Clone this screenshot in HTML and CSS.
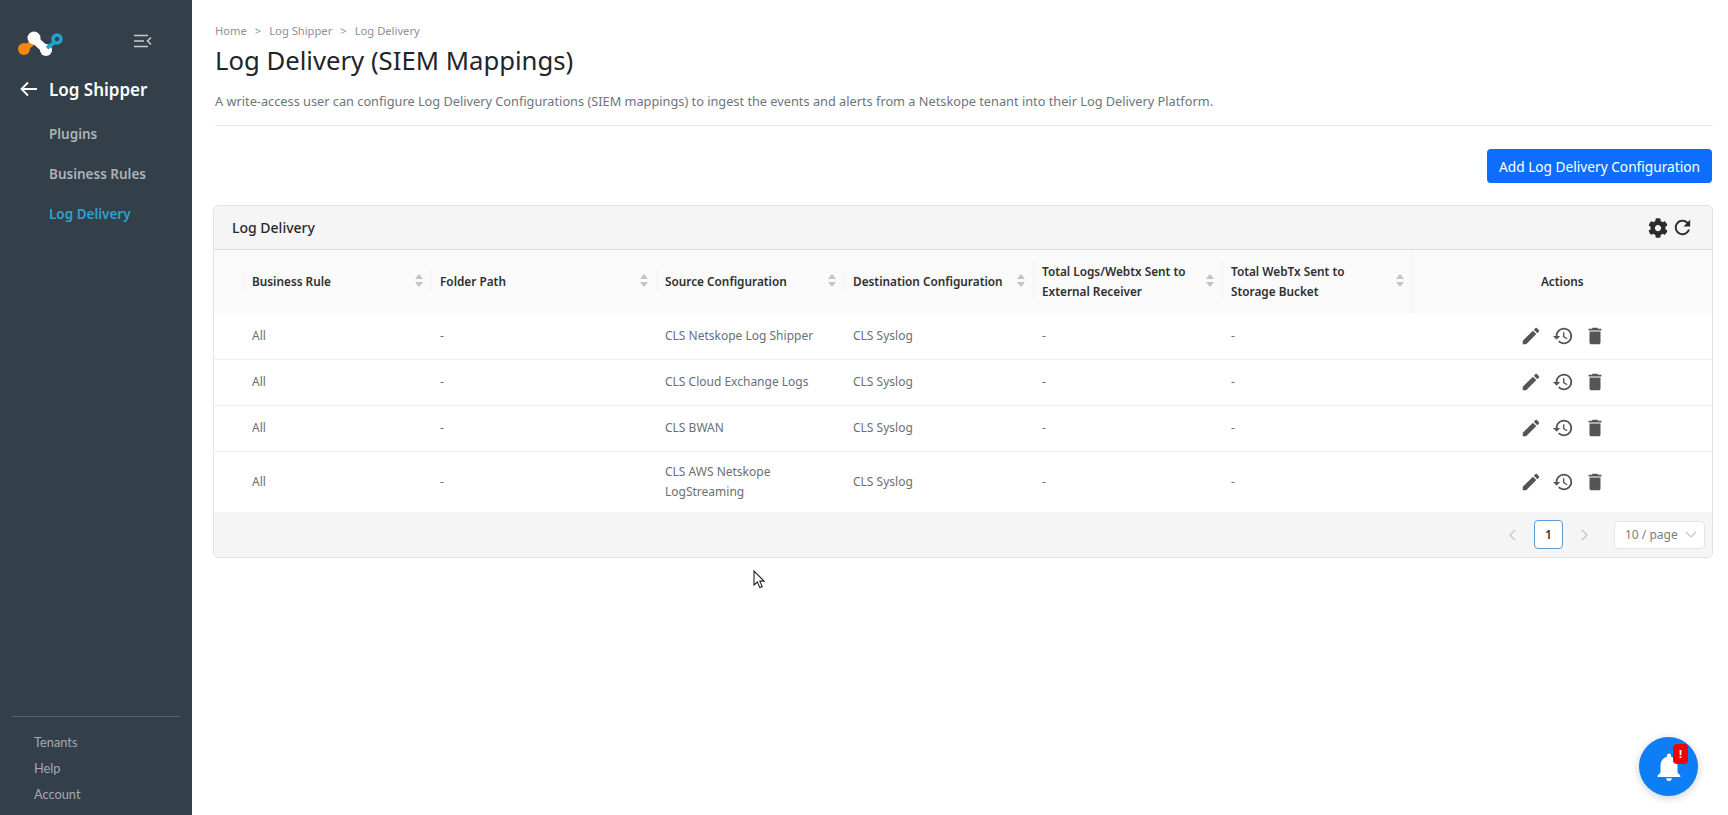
FILE: index.html
```html
<!DOCTYPE html>
<html lang="en">
<head>
  <meta charset="UTF-8" />
  <title>Log Delivery (SIEM Mappings)</title>
  <link rel="stylesheet" href="styles.css">
</head>
<body>
  <div class="container">
    <aside class="sidebar">
      <div class="brand">
        <svg class="logo" width="50" height="28" viewBox="0 0 50 28">
          <path d="M6 21 L15 14" stroke="#f7860f" stroke-width="6" stroke-linecap="round" />
          <circle cx="7" cy="20" r="6" fill="#f7860f" />
          <path d="M17 10 L29 21" stroke="#fff" stroke-width="8" />
          <circle cx="17" cy="9" r="6.5" fill="#fff" />
          <circle cx="29" cy="21" r="6" fill="#fff" />
          <path d="M30 19 L38 13" stroke="#22a3cc" stroke-width="4" />
          <circle cx="40" cy="10" r="4" fill="none" stroke="#22a3cc" stroke-width="3.5" />
        </svg>
        <svg class="collapse" width="18" height="14" viewBox="0 0 18 14">
          <path d="M0 1.5h14M0 7h10M0 12.5h14M17 3.5L13.5 7l3.5 3.5" fill="none" stroke="#c6cacd" stroke-width="1.6" />
        </svg>
      </div>
      <div class="module">
        <svg width="18" height="16" viewBox="0 0 18 16">
          <path d="M17 8H2M8 1.5L1.5 8 8 14.5" fill="none" stroke="#fff" stroke-width="1.8" />
        </svg>
        <span>Log Shipper</span>
      </div>
      <ul class="side-nav">
        <li><a href="#">Plugins</a></li>
        <li><a href="#">Business Rules</a></li>
        <li><a href="#" class="active-link">Log Delivery</a></li>
      </ul>
      <ul class="side-bottom">
        <li><a href="#">Tenants</a></li>
        <li><a href="#">Help</a></li>
        <li><a href="#">Account</a></li>
      </ul>
    </aside>

    <main class="main-content">
      <div class="breadcrumb">
        <span>Home</span><i>&gt;</i><span>Log Shipper</span><i>&gt;</i><span>Log Delivery</span>
      </div>
      <h1>Log Delivery (SIEM Mappings)</h1>
      <p class="intro">A write-access user can configure Log Delivery Configurations (SIEM mappings) to ingest the events and alerts from a Netskope tenant into their Log Delivery Platform.</p>
      <div class="toolbar">
        <button class="btn-add">Add Log Delivery Configuration</button>
      </div>

      <section class="card">
        <header class="card-head">
          <span>Log Delivery</span>
          <div class="card-tools">
            <svg width="20" height="20" viewBox="0 0 512 512"><path fill="#2b2b2b" d="M487.4 315.7l-42.6-24.6c4.3-23.2 4.3-47 0-70.2l42.6-24.6c4.9-2.8 7.1-8.6 5.5-14-11.1-35.6-30-67.8-54.7-94.6-3.8-4.1-10-5.1-14.8-2.3L380.8 110c-17.9-15.4-38.5-27.3-60.8-35.1V25.8c0-5.6-3.9-10.5-9.4-11.7-36.7-8.2-74.3-7.8-109.2 0-5.5 1.2-9.4 6.1-9.4 11.7V75c-22.2 7.9-42.8 19.8-60.8 35.1L88.7 85.5c-4.9-2.8-11-1.9-14.8 2.3-24.7 26.7-43.6 58.9-54.7 94.6-1.7 5.4.6 11.2 5.5 14L67.3 221c-4.3 23.2-4.3 47 0 70.2l-42.6 24.6c-4.9 2.8-7.1 8.6-5.5 14 11.1 35.6 30 67.8 54.7 94.6 3.8 4.1 10 5.1 14.8 2.3l42.6-24.6c17.9 15.4 38.5 27.3 60.8 35.1v49.2c0 5.6 3.9 10.5 9.4 11.7 36.7 8.2 74.3 7.8 109.2 0 5.5-1.2 9.4-6.1 9.4-11.7v-49.2c22.2-7.9 42.8-19.8 60.8-35.1l42.6 24.6c4.9 2.8 11 1.9 14.8-2.3 24.7-26.7 43.6-58.9 54.7-94.6 1.5-5.5-.7-11.3-5.6-14.1zM256 336c-44.1 0-80-35.9-80-80s35.9-80 80-80 80 35.9 80 80-35.9 80-80 80z"/></svg>
            <svg width="23" height="23" viewBox="0 0 24 24"><path fill="#2b2b2b" d="M17.65 6.35C16.2 4.9 14.21 4 12 4c-4.42 0-7.99 3.58-7.99 8s3.57 8 7.99 8c3.73 0 6.84-2.55 7.73-6h-2.08c-.82 2.33-3.04 4-5.65 4-3.31 0-6-2.69-6-6s2.69-6 6-6c1.66 0 3.14.69 4.22 1.78L13 11h7V4l-2.35 2.35z"/></svg>
          </div>
        </header>

        <table class="log-table">
          <colgroup>
            <col class="col-gap"><col class="col-rule"><col class="col-path"><col class="col-source">
            <col class="col-dest"><col class="col-logs"><col class="col-bucket"><col class="col-actions">
          </colgroup>
          <thead>
            <tr>
              <th></th>
              <th><div class="th-inner"><span>Business Rule</span><b class="sorter"></b></div></th>
              <th><div class="th-inner"><span>Folder Path</span><b class="sorter"></b></div></th>
              <th><div class="th-inner"><span>Source Configuration</span><b class="sorter"></b></div></th>
              <th><div class="th-inner"><span>Destination Configuration</span><b class="sorter"></b></div></th>
              <th><div class="th-inner"><span>Total Logs/Webtx Sent to External Receiver</span><b class="sorter"></b></div></th>
              <th><div class="th-inner"><span>Total WebTx Sent to Storage Bucket</span><b class="sorter"></b></div></th>
              <th class="th-actions">Actions</th>
            </tr>
          </thead>
          <tbody id="rows"></tbody>
        </table>

        <footer class="card-foot">
          <span class="page-arrow">
            <svg width="8" height="12" viewBox="0 0 8 12"><path d="M7 1L2 6l5 5" fill="none" stroke="#c4c4c4" stroke-width="1.2"/></svg>
          </span>
          <span class="page-current">1</span>
          <span class="page-arrow">
            <svg width="8" height="12" viewBox="0 0 8 12"><path d="M1 1l5 5-5 5" fill="none" stroke="#c4c4c4" stroke-width="1.2"/></svg>
          </span>
          <span class="page-size">10 / page
            <svg width="12" height="7" viewBox="0 0 12 7"><path d="M1 1l5 5 5-5" fill="none" stroke="#c4c4c4" stroke-width="1.1"/></svg>
          </span>
        </footer>
      </section>
    </main>
  </div>

  <svg class="cursor" width="13" height="19" viewBox="0 0 13 19">
    <path d="M1 1v14l3.4-3 2.4 5.6 2.4-1-2.4-5.5H11z" fill="#fff" stroke="#222" stroke-width="1.1"/>
  </svg>

  <div class="fab">
    <svg width="34" height="34" viewBox="0 0 24 24"><path fill="#fff" d="M12 22c1.1 0 2-.9 2-2h-4c0 1.1.89 2 2 2zm6-6v-5c0-3.07-1.64-5.64-4.5-6.32V4c0-.83-.67-1.5-1.5-1.5s-1.5.67-1.5 1.5v.68C7.63 5.36 6 7.92 6 11v5l-2 2v1h16v-1l-2-2z"/></svg>
    <span class="fab-badge">!</span>
  </div>

  <script src="app.js"></script>
</body>
</html>
```

FILE: styles.css
```css
* { box-sizing: border-box; }
html, body { height: 100%; }
body {
  margin: 0; background: white; color: #212529; overflow: hidden;
  font-family: "Noto Sans", "Open Sans", sans-serif;
}
.container { display: flex; height: 100vh; }

.sidebar {
  width: 192px; flex-shrink: 0; background: #333f49;
  display: flex; flex-direction: column;
}
.brand {
  display: flex; justify-content: space-between; align-items: center;
  padding: 26px 40px 0 17px; height: 66px;
}
.brand .logo { margin-top: -6px; }
.brand .collapse { margin-top: -11px; }
.module {
  display: flex; align-items: center; gap: 11px;
  padding: 0 0 2px 20px; height: 48px;
  color: white; font-size: 17px; font-weight: 600;
}
.side-nav { list-style: none; margin: 0; padding: 0; }
.side-nav li { height: 40px; display: flex; align-items: center; padding-left: 49px; }
.side-nav a { color: #aeb2b6; text-decoration: none; font-size: 13.5px; font-weight: 600; }
.side-nav a.active-link { color: #29a3cf; }
.side-bottom {
  list-style: none; margin: auto 12px 0; padding: 12px 0 8px 22px;
  border-top: 1px solid #56616a;
  font-family: Lato, sans-serif;
}
.side-bottom li { height: 26px; display: flex; align-items: center; }
.side-bottom a { color: #a5aaaf; text-decoration: none; font-size: 12.8px; }

.main-content { flex: 1; min-width: 0; padding: 22px 15px 0 21px; }
.breadcrumb { display: flex; font-size: 11.2px; line-height: 18px; color: #8a9199; margin-left: 2px; }
.breadcrumb i { font-style: normal; margin: 0 8px; }
h1 {
  margin: 3px 0 0 2px; font-size: 25.7px; line-height: 36px; font-weight: 400; color: #212529;
}
.intro {
  margin: 12px 0 0 2px; padding-bottom: 14px;
  font-size: 12.75px; line-height: 20px; color: #6c757d;
  border-bottom: 1px solid #e6e6e6;
}
.toolbar { display: flex; justify-content: flex-end; padding: 23px 1px 22px 0; }
.btn-add {
  height: 34px; width: 225px; padding: 0;
  background: #0d6efd; color: white; border: none; border-radius: 4px;
  font-family: inherit; font-size: 13.7px;
}

.card {
  width: 1500px; border: 1px solid #e2e2e2; border-radius: 5px; overflow: hidden;
}
.card-head {
  height: 44px; background: #f5f5f5; border-bottom: 1px solid #dfdfdf;
  display: flex; justify-content: space-between; align-items: center;
  padding: 0 18px 0 18px;
  font-size: 14px; font-weight: 500; color: #2a2a2a;
}
.card-tools { display: flex; gap: 3px; align-items: center; }

.log-table { width: 100%; border-collapse: collapse; table-layout: fixed; font-size: 12px; }
.col-gap { width: 29px; }
.col-rule { width: 188px; }
.col-path { width: 225px; }
.col-source { width: 188px; }
.col-dest { width: 189px; }
.col-logs { width: 189px; }
.col-bucket { width: 190px; }
.log-table th {
  height: 63px; padding: 0 0 2px; background: #fafafa; text-align: left;
  font-size: 11.8px; font-weight: 600; line-height: 20px; color: #2f2f2f;
}
.th-inner {
  display: flex; justify-content: space-between; align-items: center; gap: 6px;
  padding: 0 8px 0 8px; min-height: 22px;
  border-left: 1px solid #f3f3f3;
}
.log-table th.th-actions { text-align: center; border-left: 1px solid #f3f3f3; }
.sorter { flex-shrink: 0; width: 8px; height: 13px; position: relative; }
.sorter::before, .sorter::after {
  content: ""; position: absolute; left: 0;
  border-left: 4px solid transparent; border-right: 4px solid transparent;
}
.sorter::before { top: 0; border-bottom: 5px solid #c4c4c4; }
.sorter::after { bottom: 0; border-top: 5px solid #c4c4c4; }
.log-table td {
  padding: 0 8px 0 9px; height: 46px; line-height: 20px; color: #6b6f73;
  border-bottom: 1px solid #f0f0f0;
}
.log-table tr:last-child td { height: 61px; border-bottom: none; }
.row-actions { display: flex; justify-content: center; gap: 10px; }

.card-foot {
  height: 45px; background: #f5f5f5;
  display: flex; justify-content: flex-end; align-items: center;
  padding-right: 7px; font-size: 12px;
}
.page-arrow { width: 28px; display: flex; justify-content: center; }
.page-current {
  width: 29px; height: 29px; margin: 0 8px; border: 1px solid #5b9bd5; border-radius: 4px;
  background: white; display: flex; align-items: center; justify-content: center;
  font-weight: 600; color: #333;
}
.page-size {
  width: 91px; height: 28px; margin-left: 15px; border: 1px solid #e4e4e4; border-radius: 4px;
  background: white; display: flex; align-items: center; justify-content: space-between;
  padding: 0 7px 0 10px; color: #7d7d7d;
}

.cursor { position: absolute; left: 753px; top: 570px; }
.fab {
  position: absolute; left: 1639px; top: 737px; width: 59px; height: 59px; border-radius: 50%;
  background: #0d7ef5; box-shadow: 0 2px 8px rgba(0,0,0,0.2);
  display: flex; align-items: center; justify-content: center;
}
.fab-badge {
  position: absolute; left: 34px; top: 7px; width: 15px; height: 20px;
  background: #f00000; border-radius: 4px; color: white;
  font-size: 11px; font-weight: 700; line-height: 20px; text-align: center;
}
```

FILE: app.js
```js
const logRows = [
  'CLS Netskope Log Shipper',
  'CLS Cloud Exchange Logs',
  'CLS BWAN',
  'CLS AWS Netskope LogStreaming'
];

const actionIcons = `
  <svg width="22" height="22" viewBox="0 0 24 24"><path fill="#555" d="M3 17.25V21h3.75L17.81 9.94l-3.75-3.75L3 17.25zM20.71 7.04c.39-.39.39-1.02 0-1.41l-2.34-2.34c-.39-.39-1.02-.39-1.41 0l-1.83 1.83 3.75 3.75 1.83-1.83z"/></svg>
  <svg width="22" height="22" viewBox="0 0 24 24"><path fill="#555" d="M13 3c-4.97 0-9 4.03-9 9H1l3.89 3.89.07.14L9 12H6c0-3.87 3.13-7 7-7s7 3.13 7 7-3.13 7-7 7c-1.93 0-3.68-.79-4.94-2.06l-1.42 1.42C8.27 19.99 10.51 21 13 21c4.97 0 9-4.03 9-9s-4.03-9-9-9zm-1 5v5l4.28 2.54.72-1.21-3.5-2.08V8H12z"/></svg>
  <svg width="22" height="22" viewBox="0 0 24 24"><path fill="#555" d="M6 19c0 1.1.9 2 2 2h8c1.1 0 2-.9 2-2V7H6v12zM19 4h-3.5l-1-1h-5l-1 1H5v2h14V4z"/></svg>
`;

const tbody = document.getElementById('rows');
logRows.forEach(source => {
  const row = document.createElement('tr');
  row.innerHTML = `
    <td></td>
    <td>All</td>
    <td>-</td>
    <td>${source}</td>
    <td>CLS Syslog</td>
    <td>-</td>
    <td>-</td>
    <td><div class="row-actions">${actionIcons}</div></td>
  `;
  tbody.appendChild(row);
});
```
